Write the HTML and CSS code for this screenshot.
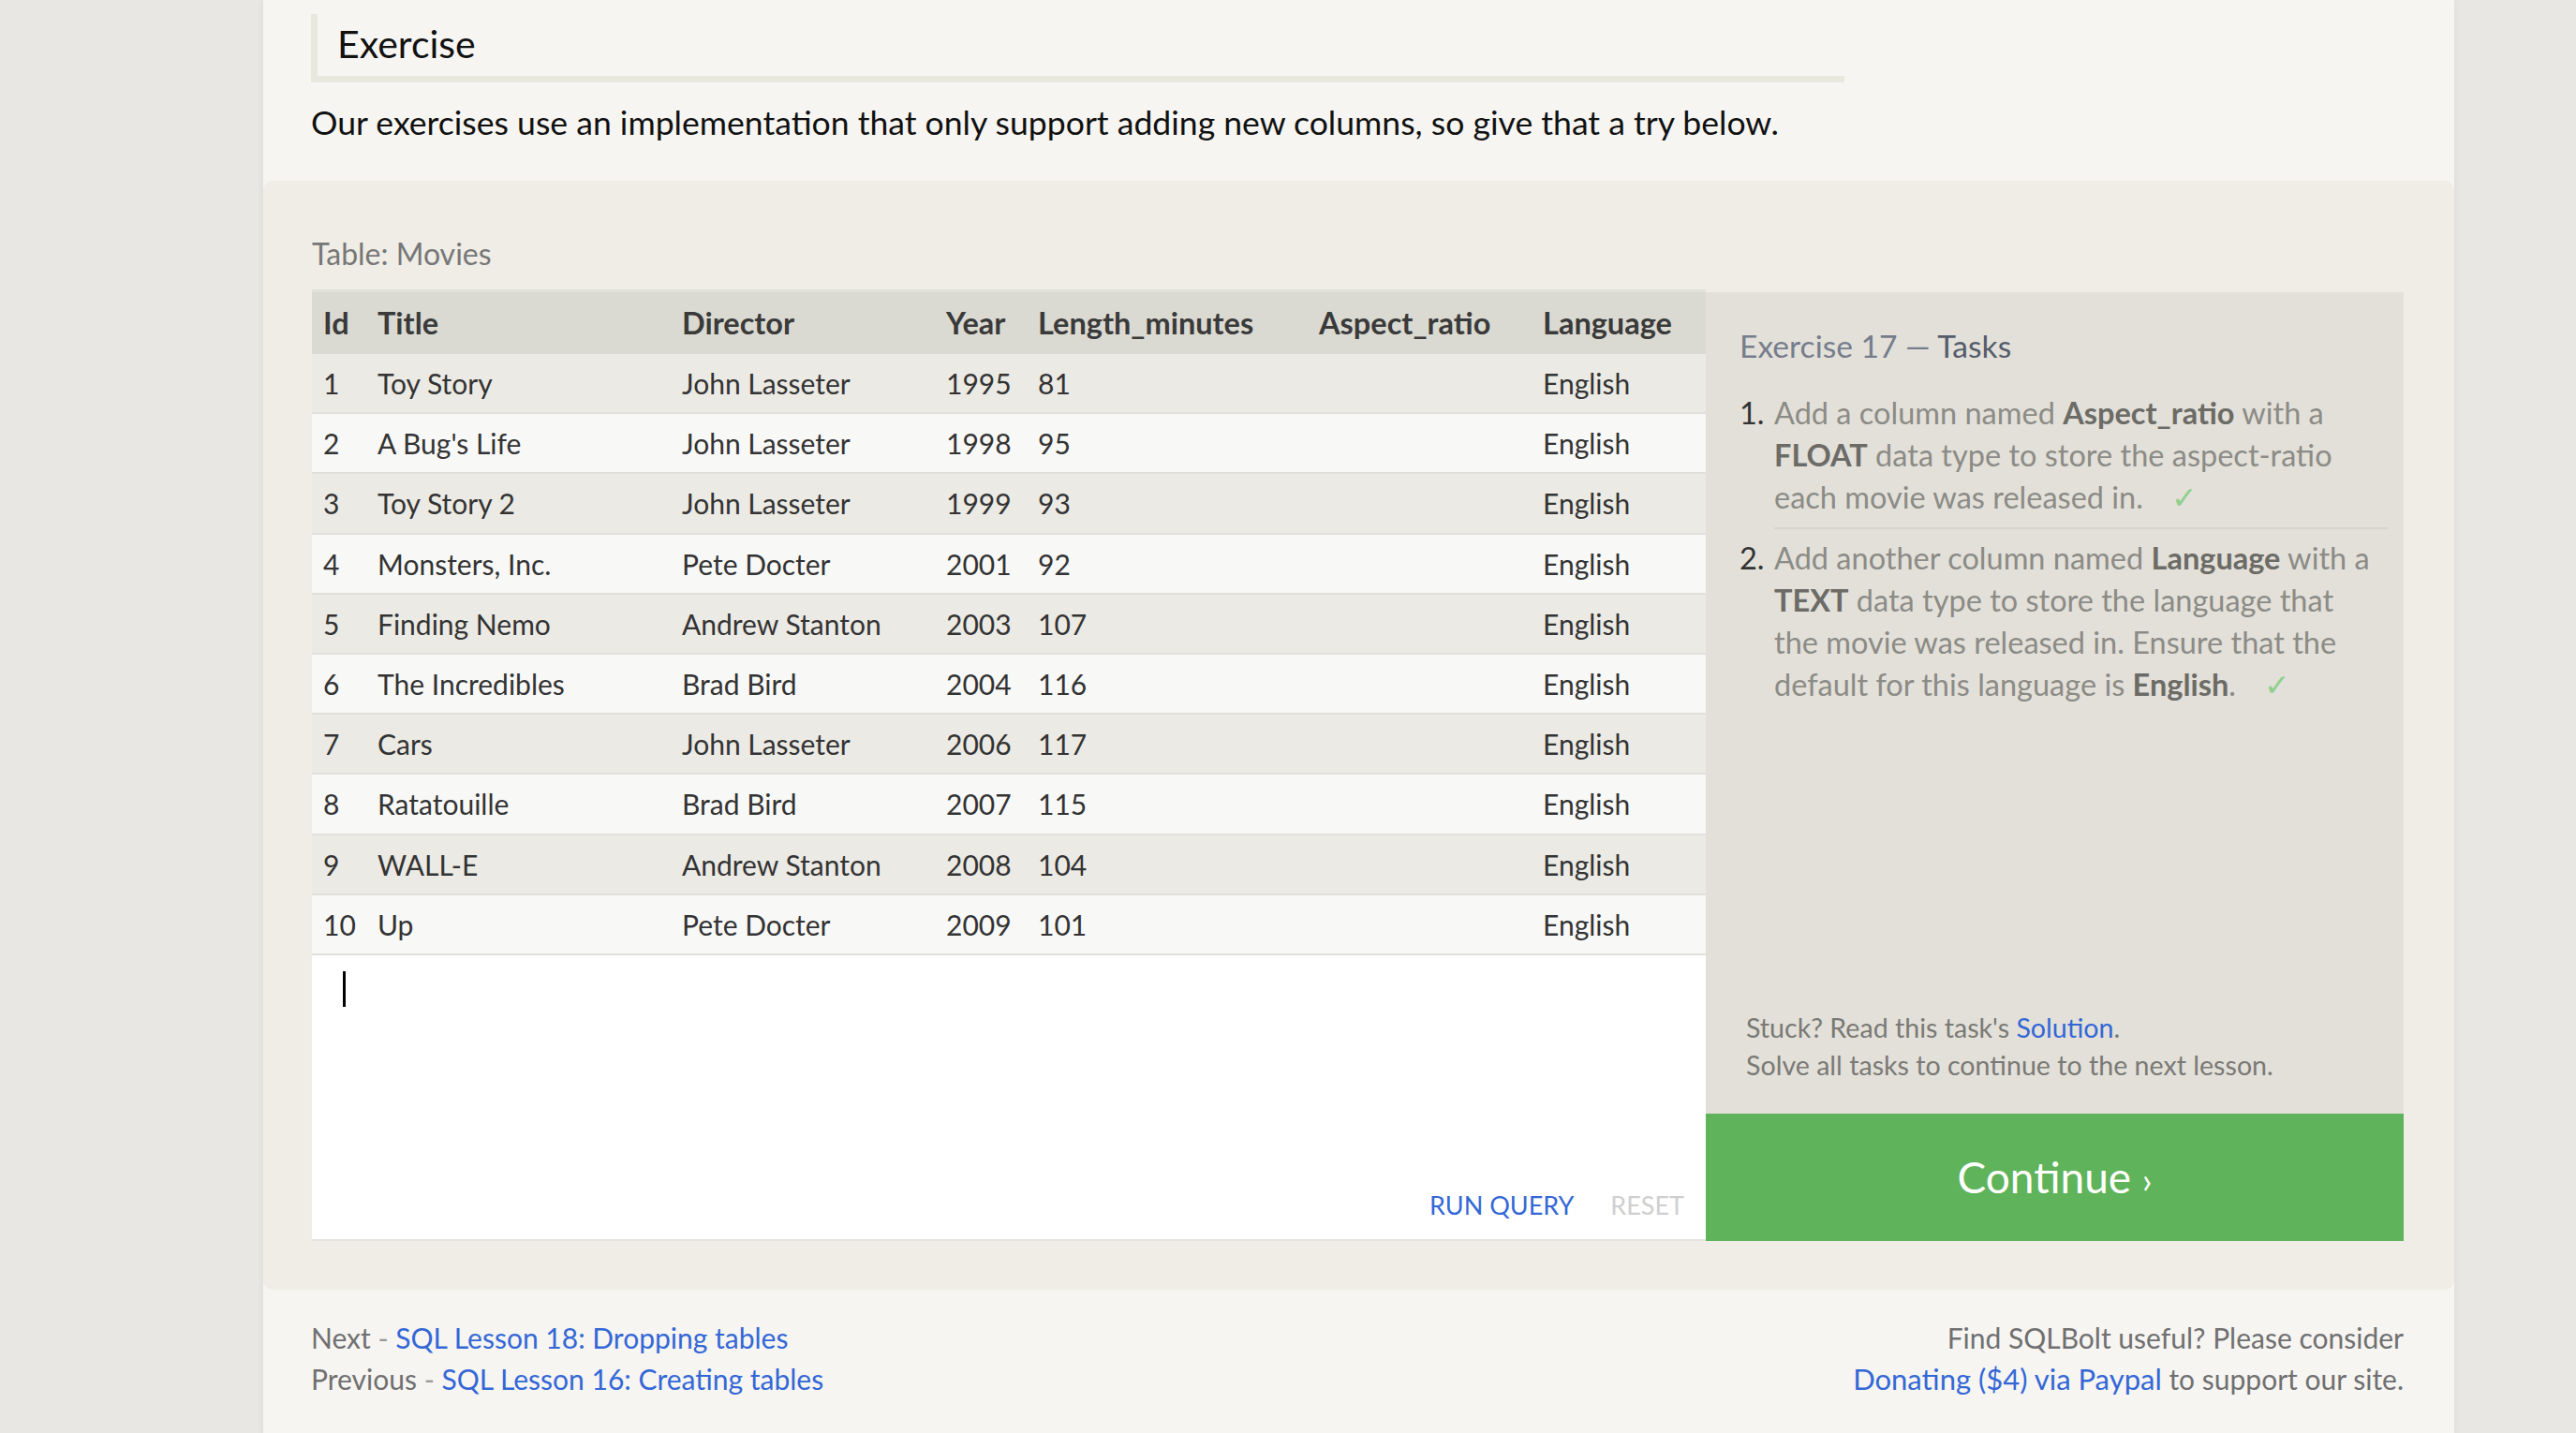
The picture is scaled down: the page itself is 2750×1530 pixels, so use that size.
FILE: index.html
```html
<!DOCTYPE html>
<html lang="en">
<head>
<meta charset="utf-8">
<title>SQLBolt - Exercise 17</title>
<link rel="stylesheet" href="styles.css">
</head>
<body>
<div class="page">
  <section class="intro">
    <h2 class="ex-title">Exercise</h2>
    <p class="lead">Our exercises use an implementation that only support adding new columns, so give that a try below.</p>
  </section>

  <section class="exercise">
    <div class="table-label">Table: Movies</div>
    <div class="workspace">
      <div class="left">
        <table class="movies">
          <colgroup>
            <col class="c-id"><col class="c-title"><col class="c-director"><col class="c-year"><col class="c-length"><col class="c-aspect"><col class="c-lang">
          </colgroup>
          <thead>
            <tr><th>Id</th><th>Title</th><th>Director</th><th>Year</th><th>Length_minutes</th><th>Aspect_ratio</th><th>Language</th></tr>
          </thead>
          <tbody>
            <tr><td>1</td><td>Toy Story</td><td>John Lasseter</td><td>1995</td><td>81</td><td></td><td>English</td></tr>
            <tr><td>2</td><td>A Bug's Life</td><td>John Lasseter</td><td>1998</td><td>95</td><td></td><td>English</td></tr>
            <tr><td>3</td><td>Toy Story 2</td><td>John Lasseter</td><td>1999</td><td>93</td><td></td><td>English</td></tr>
            <tr><td>4</td><td>Monsters, Inc.</td><td>Pete Docter</td><td>2001</td><td>92</td><td></td><td>English</td></tr>
            <tr><td>5</td><td>Finding Nemo</td><td>Andrew Stanton</td><td>2003</td><td>107</td><td></td><td>English</td></tr>
            <tr><td>6</td><td>The Incredibles</td><td>Brad Bird</td><td>2004</td><td>116</td><td></td><td>English</td></tr>
            <tr><td>7</td><td>Cars</td><td>John Lasseter</td><td>2006</td><td>117</td><td></td><td>English</td></tr>
            <tr><td>8</td><td>Ratatouille</td><td>Brad Bird</td><td>2007</td><td>115</td><td></td><td>English</td></tr>
            <tr><td>9</td><td>WALL-E</td><td>Andrew Stanton</td><td>2008</td><td>104</td><td></td><td>English</td></tr>
            <tr><td>10</td><td>Up</td><td>Pete Docter</td><td>2009</td><td>101</td><td></td><td>English</td></tr>
          </tbody>
        </table>
        <div class="editor">
          <span class="cursor"></span>
          <div class="actions">
            <span class="run">RUN QUERY</span>
            <span class="reset">RESET</span>
          </div>
        </div>
      </div>

      <aside class="tasks">
        <div class="tasks-body">
          <h3 class="tasks-title"><span class="ex-num">Exercise 17 — </span><span class="tasks-word">Tasks</span></h3>
          <ol class="task-list">
            <li><span class="num">1.</span><span class="txt">Add a column named <b>Aspect_ratio</b> with a <b>FLOAT</b> data type to store the aspect-ratio each movie was released in.<span class="check">✓</span></span></li>
            <li><span class="num">2.</span><span class="txt">Add another column named <b>Language</b> with a <b>TEXT</b> data type to store the language that the movie was released in. Ensure that the default for this language is <b>English</b>.<span class="check">✓</span></span></li>
          </ol>
          <div class="stuck">Stuck? Read this task's <a class="link">Solution</a>.<br>Solve all tasks to continue to the next lesson.</div>
        </div>
        <div class="continue">Continue <span class="chev">›</span></div>
      </aside>
    </div>
  </section>

  <footer class="footer">
    <div class="nav">
      <div>Next <span class="dash">-</span> <a class="link">SQL Lesson 18: Dropping tables</a></div>
      <div>Previous <span class="dash">-</span> <a class="link">SQL Lesson 16: Creating tables</a></div>
    </div>
    <div class="donate">
      <div>Find SQLBolt useful? Please consider</div>
      <div><a class="link donate-link">Donating ($4) via Paypal</a> to support our site.</div>
    </div>
  </footer>
</div>
</body>
</html>
```

FILE: styles.css
```css
* { box-sizing: border-box; }
html, body { margin: 0; padding: 0; }
body {
  background: #e9e7e3;
  font-family: Lato, "Liberation Sans", sans-serif;
  color: #111;
}
.page {
  margin-left: 281px;
  width: 2339px;
  min-height: 1530px;
  background: #f6f5f2;
  box-shadow: 0 0 8px rgba(0, 0, 0, 0.06);
}

/* intro */
.intro {
  height: 193px;
  padding: 15px 0 0 51px;
}
.ex-title {
  margin: 0;
  width: 1637px;
  height: 73px;
  border-left: 7px solid #e9e8df;
  border-bottom: 7px solid #e9e8df;
  padding-left: 21px;
  font-size: 41px;
  font-weight: 400;
  line-height: 63px;
  color: #111;
}
.lead {
  margin: 22px 0 0;
  font-size: 35.6px;
  line-height: 42px;
  color: #111;
}

/* exercise */
.exercise {
  background: #efede6;
  border-radius: 10px;
  padding: 58px 54px 52px 52px;
}
.table-label {
  font-size: 32px;
  line-height: 40px;
  color: #777;
  margin-bottom: 18px;
}
.workspace {
  display: flex;
  height: 1016px;
}
.left {
  width: 1488px;
  display: flex;
  flex-direction: column;
}
.movies {
  width: 1488px;
  table-layout: fixed;
  border-collapse: separate;
  border-spacing: 0;
  font-size: 30px;
  color: #333;
}
.c-id { width: 58px; }
.c-title { width: 325px; }
.c-director { width: 282px; }
.c-year { width: 98px; }
.c-length { width: 300px; }
.c-aspect { width: 239px; }
.c-lang { width: 186px; }
.movies th {
  text-align: left;
  font-size: 32.5px;
  font-weight: 700;
  color: #3a3a3a;
  background: #dbdad2;
  border-top: 3px solid #e2e1da;
  padding: 0 0 0 12px;
  line-height: 66px;
  white-space: nowrap;
}
.movies td {
  padding: 0 0 0 12px;
  line-height: 62.2px;
  border-bottom: 2px solid #e1e0db;
  white-space: nowrap;
}
.movies tbody tr:nth-child(odd) td { background: #ebeae4; }
.movies tbody tr:nth-child(even) td { background: #f8f8f7; }

.editor {
  flex: 1;
  background: #fff;
  border-bottom: 2px solid #e4e3dd;
  display: flex;
  flex-direction: column;
  padding: 17px 23px 18px 33px;
}
.cursor {
  display: block;
  width: 3px;
  height: 38px;
  background: #000;
}
.actions {
  margin-top: auto;
  display: flex;
  justify-content: flex-end;
  gap: 39px;
  font-size: 27px;
  line-height: 36px;
}
.run { color: #3467d6; }
.reset { color: #cfcfcf; }

/* tasks panel */
.tasks {
  width: 745px;
  margin-top: 3px;
  background: #e2e0d9;
  display: flex;
  flex-direction: column;
}
.tasks-body {
  flex: 1;
  display: flex;
  flex-direction: column;
  padding: 37px 16px 0 36px;
}
.tasks-title {
  margin: 0;
  font-size: 33.6px;
  line-height: 40px;
  font-weight: 400;
}
.ex-num { color: #767d8c; }
.tasks-word { color: #555c6b; }
.task-list {
  list-style: none;
  margin: 29px 0 0;
  padding: 0;
}
.task-list li {
  display: flex;
  font-size: 32.5px;
  line-height: 45px;
  color: #8c8b86;
}
.task-list li + li { padding-top: 8px; }
.task-list li:first-child .txt {
  padding-bottom: 10px;
  border-bottom: 2px solid #d7d5cc;
}
.num {
  width: 37px;
  flex: none;
  color: #333;
}
.txt { flex: 1; padding-right: 12px; }
.txt b { color: #6c6b66; font-weight: 700; }
.check {
  color: #8fd08d;
  margin-left: 30px;
}
.stuck {
  margin-top: auto;
  margin-bottom: 32px;
  padding-left: 7px;
  font-size: 28.6px;
  line-height: 40px;
  color: #7a7975;
}
.link { color: #3467d6; text-decoration: none; }
.continue {
  height: 136px;
  background: #5fb35a;
  color: #fff;
  font-size: 46px;
  line-height: 136px;
  text-align: center;
}
.chev { font-size: 38px; }

/* footer */
.footer {
  display: flex;
  justify-content: space-between;
  padding: 29px 54px 40px 51px;
  font-size: 30px;
  line-height: 44px;
  color: #707070;
}
.dash { color: #999; }
.donate { text-align: right; }
.donate-link { font-size: 31px; }
```
